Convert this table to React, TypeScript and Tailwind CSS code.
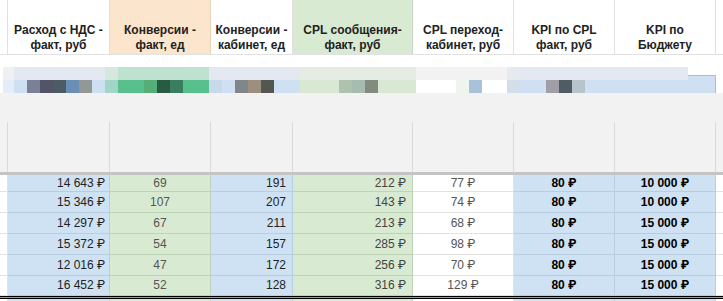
import React from "react";

type Seg = { w: string; bg: string };

// blurred strip under the header, left part (0..688)
const stripTop: Seg[] = [
  { w: "w-[3px]", bg: "bg-white" },
  { w: "w-[11px]", bg: "bg-[#eef0f4]" },
  { w: "w-[91px]", bg: "bg-[#e4e9f1]" },
  { w: "w-[13px]", bg: "bg-[#d5e7de]" },
  { w: "w-[91px]", bg: "bg-[#bfe1cf]" },
  { w: "w-[91px]", bg: "bg-[#e4e9f1]" },
  { w: "w-[116px]", bg: "bg-[#e6ebe3]" },
  { w: "w-[91px]", bg: "bg-[#f2f2f2]" },
  { w: "w-[13px]", bg: "bg-[#e6e9ee]" },
  { w: "w-[168px]", bg: "bg-[#e4e9f1]" },
];

const stripBottom: Seg[] = [
  { w: "w-[3px]", bg: "bg-white" },
  { w: "w-[11px]", bg: "bg-[#e3edf8]" },
  { w: "w-[13px]", bg: "bg-[#cfe0f2]" },
  { w: "w-[13px]", bg: "bg-[#7a8196]" },
  { w: "w-[13px]", bg: "bg-[#545469]" },
  { w: "w-[13px]", bg: "bg-[#4d5b63]" },
  { w: "w-[13px]", bg: "bg-[#6a8fb5]" },
  { w: "w-[13px]", bg: "bg-[#939795]" },
  { w: "w-[13px]", bg: "bg-[#cde0f2]" },
  { w: "w-[13px]", bg: "bg-[#a0d5c7]" },
  { w: "w-[26px]", bg: "bg-[#58c08d]" },
  { w: "w-[13px]", bg: "bg-[#55ae78]" },
  { w: "w-[13px]", bg: "bg-[#275b44]" },
  { w: "w-[13px]", bg: "bg-[#3a7d60]" },
  { w: "w-[26px]", bg: "bg-[#58c08d]" },
  { w: "w-[13px]", bg: "bg-[#c7d9ea]" },
  { w: "w-[13px]", bg: "bg-[#cfe0f2]" },
  { w: "w-[13px]", bg: "bg-[#7f878a]" },
  { w: "w-[13px]", bg: "bg-[#9c8f80]" },
  { w: "w-[13px]", bg: "bg-[#545650]" },
  { w: "w-[26px]", bg: "bg-[#cfe0f2]" },
  { w: "w-[39px]", bg: "bg-[#d8e8d3]" },
  { w: "w-[13px]", bg: "bg-[#afc2ae]" },
  { w: "w-[13px]", bg: "bg-[#a6bcb0]" },
  { w: "w-[13px]", bg: "bg-[#838a80]" },
  { w: "w-[38px]", bg: "bg-[#d8e8d3]" },
  { w: "w-[40px]", bg: "bg-white" },
  { w: "w-[13px]", bg: "bg-[#edf5ec]" },
  { w: "w-[13px]", bg: "bg-[#a9c1d9]" },
  { w: "w-[25px]", bg: "bg-white" },
  { w: "w-[13px]", bg: "bg-[#d2dfeb]" },
  { w: "w-[26px]", bg: "bg-[#cfe0f2]" },
  { w: "w-[13px]", bg: "bg-[#a09fa8]" },
  { w: "w-[13px]", bg: "bg-[#4f5c62]" },
  { w: "w-[13px]", bg: "bg-[#b8c4cb]" },
  { w: "w-[103px]", bg: "bg-[#cfe0f2]" },
];

const headers = [
  { cls: "w-[102px] bg-white border-[#e0e0e0]", l1: "Расход с НДС -", l2: "факт, руб" },
  { cls: "w-[101px] bg-[#fce5cd] border-[#e9d2ba]", l1: "Конверсии -", l2: "факт, ед" },
  { cls: "w-[82px] bg-white border-[#e0e0e0]", l1: "Конверсии -", l2: "кабинет, ед" },
  { cls: "w-[120px] bg-[#d9ead3] border-[#c6d8bf]", l1: "CPL сообщения-", l2: "факт, руб" },
  { cls: "w-[101px] bg-white border-[#e0e0e0]", l1: "CPL переход-", l2: "кабинет, руб" },
  { cls: "w-[101px] bg-white border-[#e0e0e0]", l1: "KPI по CPL", l2: "факт, руб" },
  { cls: "w-[101px] bg-white border-[#e0e0e0]", l1: "KPI по", l2: "Бюджету" },
];

// data cell styles per column
const cellCls = [
  "w-[102px] bg-[#cfe2f3] border-[#b9cde0] justify-end pr-[4px] text-[#222]",
  "w-[101px] bg-[#d9ead3] border-[#bcd3b5] justify-center text-[#555]",
  "w-[82px] bg-[#cfe2f3] border-[#b9cde0] justify-end pr-[6px] text-[#222]",
  "w-[120px] bg-[#d9ead3] border-[#bcd3b5] justify-end pr-[6px] text-[#444]",
  "w-[101px] bg-white border-[#e2e2e2] justify-center text-[#555]",
  "w-[101px] bg-[#cfe2f3] border-[#b9cde0] justify-center font-bold text-black",
  "w-[101px] bg-[#cfe2f3] border-[#b9cde0] justify-center font-bold text-black",
];

const bottomCls = [
  "w-[102px] bg-[#cfe2f3] border-[#b9cde0]",
  "w-[101px] bg-[#d9ead3] border-[#bcd3b5]",
  "w-[82px] bg-[#cfe2f3] border-[#b9cde0]",
  "w-[120px] bg-[#d9ead3] border-[#bcd3b5]",
  "w-[101px] bg-white border-[#e2e2e2]",
  "w-[101px] bg-[#cfe2f3] border-[#b9cde0]",
  "w-[101px] bg-[#cfe2f3] border-[#b9cde0]",
];

const rows = [
  { h: "h-[17px]", v: ["14 643 ₽", "69", "191", "212 ₽", "77 ₽", "80 ₽", "10 000 ₽"] },
  { h: "h-[21px]", v: ["15 346 ₽", "107", "207", "143 ₽", "74 ₽", "80 ₽", "10 000 ₽"] },
  { h: "h-[21px]", v: ["14 297 ₽", "67", "211", "213 ₽", "68 ₽", "80 ₽", "15 000 ₽"] },
  { h: "h-[21px]", v: ["15 372 ₽", "54", "157", "285 ₽", "98 ₽", "80 ₽", "15 000 ₽"] },
  { h: "h-[21px]", v: ["12 016 ₽", "47", "172", "256 ₽", "70 ₽", "80 ₽", "15 000 ₽"] },
  { h: "h-[20px]", v: ["16 452 ₽", "52", "128", "316 ₽", "129 ₽", "80 ₽", "15 000 ₽"] },
];

const grayCols = ["w-[102px]", "w-[101px]", "w-[82px]", "w-[120px]", "w-[101px]", "w-[101px]", "w-[101px]"];

export default function App() {
  return (
    <div
      className="w-[723px] h-[301px] overflow-hidden bg-white flex flex-col text-[12px] leading-[15px]"
      style={{ fontFamily: '"Liberation Sans", Roboto, "Noto Sans", Arial, sans-serif' }}
    >
      {/* header */}
      <div className="flex h-[55px] shrink-0 border-b border-[#e2e2e2]">
        <div className="w-[8px] border-r border-[#e0e0e0]" />
        {headers.map((h, i) => (
          <div
            key={i}
            className={"flex items-end justify-center border-r pb-[1px] font-bold text-[#222] text-center " + h.cls}
          >
            <div>
              {h.l1}
              <br />
              {h.l2}
            </div>
          </div>
        ))}
        <div className="w-[7px]" />
      </div>

      <div className="h-[12px] shrink-0 bg-white" />

      {/* blurred row */}
      <div className="flex h-[26px] shrink-0">
        <div className="w-[688px] flex flex-col">
          <div className="flex h-[13px]">
            {stripTop.map((s, i) => (
              <div key={i} className={s.w + " " + s.bg} />
            ))}
          </div>
          <div className="flex h-[13px]">
            {stripBottom.map((s, i) => (
              <div key={i} className={s.w + " " + s.bg} />
            ))}
          </div>
        </div>
        <div className="w-[28px] flex flex-col">
          <div className="h-[8px] bg-white" />
          <div className="flex-1 bg-[#cfe0f2] border-t border-r border-[#a9bfd6]" />
        </div>
        <div className="w-[7px] bg-white" />
      </div>

      {/* frozen gray area */}
      <div className="h-[29px] shrink-0 bg-[#f2f2f2]" />
      <div className="flex h-[50px] shrink-0 bg-[#f2f2f2]">
        <div className="w-[8px] border-r border-[#d9d9d9]" />
        {grayCols.map((w, i) => (
          <div key={i} className={w + " border-r border-[#d9d9d9]"} />
        ))}
      </div>
      <div className="h-[3px] shrink-0 bg-[#c4c4c4]" />

      {/* data rows */}
      {rows.map((r, ri) => (
        <div key={ri} className={"flex shrink-0 " + r.h}>
          <div className="w-[8px] bg-white border-r border-b border-[#e2e2e2]" />
          {r.v.map((v, ci) => (
            <div key={ci} className={"flex items-center border-r border-b whitespace-nowrap " + cellCls[ci]}>
              {v}
            </div>
          ))}
          <div className="w-[7px] bg-white border-b border-[#e2e2e2]" />
        </div>
      ))}

      <div className="h-[3px] shrink-0 border-y border-black bg-[#9a9a9a]" />

      <div className="flex flex-1">
        <div className="w-[8px] bg-white border-r border-[#e2e2e2]" />
        {bottomCls.map((c, i) => (
          <div key={i} className={"border-r " + c} />
        ))}
        <div className="w-[7px] bg-white" />
      </div>
    </div>
  );
}
